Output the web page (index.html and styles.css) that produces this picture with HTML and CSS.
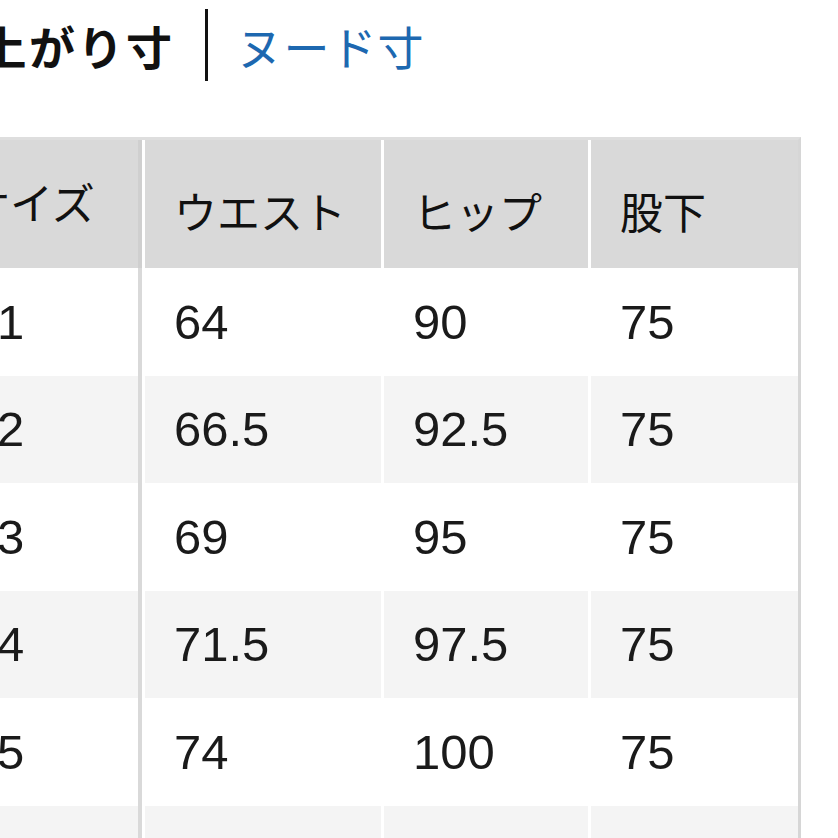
FILE: index.html
```html
<!DOCTYPE html>
<html lang="ja">
<head>
<meta charset="utf-8">
<title>サイズ表</title>
<link rel="stylesheet" href="styles.css">
</head>
<body>
<div class="page">
  <div class="tabs">
    <span class="tab tab-active">仕上がり寸</span>
    <span class="divider"></span>
    <span class="tab tab-link">ヌード寸</span>
  </div>
  <div class="table">
    <div class="row head">
      <div class="cell first">サイズ</div>
      <div class="cell">ウエスト</div>
      <div class="cell">ヒップ</div>
      <div class="cell">股下</div>
    </div>
    <div class="row">
      <div class="cell first">1</div>
      <div class="cell">64</div>
      <div class="cell">90</div>
      <div class="cell">75</div>
    </div>
    <div class="row alt">
      <div class="cell first">2</div>
      <div class="cell">66.5</div>
      <div class="cell">92.5</div>
      <div class="cell">75</div>
    </div>
    <div class="row">
      <div class="cell first">3</div>
      <div class="cell">69</div>
      <div class="cell">95</div>
      <div class="cell">75</div>
    </div>
    <div class="row alt">
      <div class="cell first">4</div>
      <div class="cell">71.5</div>
      <div class="cell">97.5</div>
      <div class="cell">75</div>
    </div>
    <div class="row">
      <div class="cell first">5</div>
      <div class="cell">74</div>
      <div class="cell">100</div>
      <div class="cell">75</div>
    </div>
    <div class="row alt">
      <div class="cell first">6</div>
      <div class="cell">76.5</div>
      <div class="cell">102.5</div>
      <div class="cell">75</div>
    </div>
  </div>
</div>
</body>
</html>
```

FILE: styles.css
```css
html, body {
  margin: 0;
  padding: 0;
  background: #fff;
  overflow: hidden;
}

.page {
  width: 838px;
  height: 838px;
  overflow: hidden;
  padding-top: 9px;
  box-sizing: border-box;
  font-family: "Noto Sans CJK JP", "Noto Sans", sans-serif;
  color: #111;
}

.tabs {
  display: flex;
  align-items: center;
  margin-left: -68px;
  height: 72px;
}

.tab {
  font-size: 46px;
  line-height: 1;
  white-space: nowrap;
}

.tab-active {
  font-weight: 700;
  color: #111;
  letter-spacing: 2.5px;
}

.tab-link {
  font-weight: 400;
  color: #1d68b0;
  letter-spacing: 1px;
}

.divider {
  width: 3px;
  height: 72px;
  background: #111;
  margin: 0 29px 0 30px;
}

.table {
  margin-top: 56px;
  margin-left: -40px;
  width: 841px;
  border-top: 3px solid #dedede;
  border-right: 3px solid #d6d6d6;
  box-sizing: border-box;
  background: #fff;
}

.row {
  display: grid;
  grid-template-columns: 182px 236px 204px 207px;
  column-gap: 3px;
  height: 107.5px;
}

.cell {
  display: flex;
  align-items: center;
  padding-left: 29px;
  font-family: "Liberation Sans", "Noto Sans CJK JP", sans-serif;
  font-size: 49px;
  color: #1a1a1a;
  background: #fff;
  white-space: nowrap;
  overflow: hidden;
}

.cell.first {
  border-right: 4px solid #d9d9d9;
  padding-left: 37px;
}

.alt .cell {
  background: #f4f4f4;
}

.row.head {
  height: 128px;
}

.head .cell {
  background: #d9d9d9;
  font-family: "Noto Sans CJK JP", sans-serif;
  font-size: 43px;
  color: #111;
  padding-top: 12px;
  box-sizing: border-box;
}

.head .cell.first {
  padding-left: 7px;
  padding-top: 0;
  padding-bottom: 6px;
  border-right-color: #cfcfcf;
}
```
